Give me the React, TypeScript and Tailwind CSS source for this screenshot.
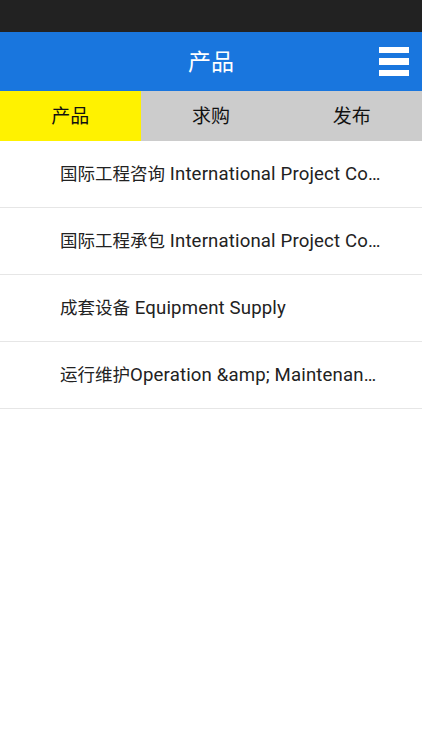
import React, { useState } from 'react';

const items = [
    "国际工程咨询 International Project Consulting",
    "国际工程承包 International Project Contracting",
    "成套设备 Equipment Supply",
    "运行维护Operation &amp; Maintenance",
];

const tabs = ["产品", "求购", "发布"];

// CJK glyphs render a little narrower than the latin ones in the screenshot
const splitText = (text: string) => text.split(/([\u4e00-\u9fff]+)/).filter(Boolean);

const App = () => {
    const [active, setActive] = useState(0);

    return (
        <div className="w-[422px] h-[750px] bg-white font-['Roboto','Noto_Sans_CJK_SC',sans-serif] overflow-hidden">
            {/* status bar */}
            <div className="h-[32px] bg-[#222222]" />

            {/* title bar */}
            <div className="relative h-[59px] bg-[#1976de] flex items-center justify-center">
                <h1 className="text-white text-[23px] leading-none pt-[2px]">产品</h1>
                <button className="absolute right-[13px] top-[15px] flex flex-col gap-[5px]">
                    <span className="block w-[30px] h-[6px] bg-white" />
                    <span className="block w-[30px] h-[7px] bg-white" />
                    <span className="block w-[30px] h-[6px] bg-white" />
                </button>
            </div>

            {/* tabs */}
            <div className="flex h-[50px] bg-[#cccccc]">
                {tabs.map((t, i) => (
                    <div
                        key={t}
                        onClick={() => setActive(i)}
                        className={`flex-1 flex items-center justify-center pt-[3px] text-[19px] text-[#111] ${active === i ? "bg-[#fff200]" : ""}`}
                    >
                        {t}
                    </div>
                ))}
            </div>

            {/* list */}
            <ul>
                {items.map((text, i) => (
                    <li key={i} className="h-[67px] border-b border-[#e6e6e6] flex items-center pt-[2px] pl-[60px] pr-[39px]">
                        <span className="block truncate text-[18.6px] tracking-[0.15px] text-[#222]">
                            {splitText(text).map((part, j) =>
                                /[\u4e00-\u9fff]/.test(part)
                                    ? <span key={j} className="text-[17.5px] tracking-normal">{part}</span>
                                    : <span key={j}>{part}</span>
                            )}
                        </span>
                    </li>
                ))}
            </ul>
        </div>
    );
};

export default App;
